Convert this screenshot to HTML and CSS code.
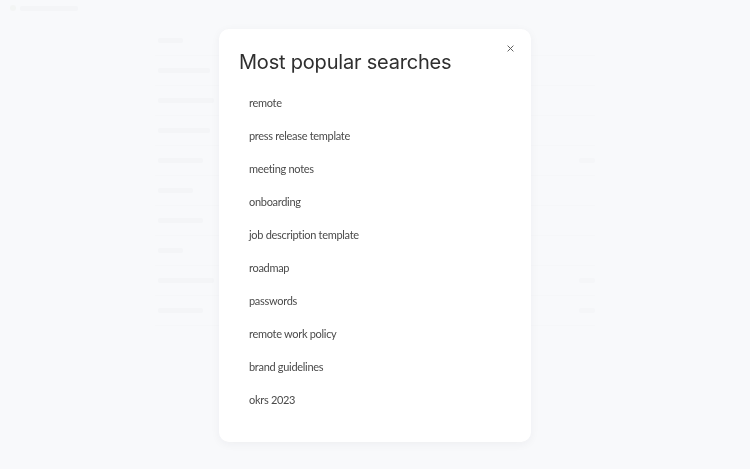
FILE: index.html
```html
<!DOCTYPE html>
<html lang="en">
<head>
<meta charset="utf-8">
<title>Most popular searches</title>
<link rel="stylesheet" href="styles.css">
</head>
<body>
<div class="page">
  <header class="topbar">
    <span class="logo-dot"></span>
    <span class="logo-text"></span>
  </header>
  <main class="content">
    <div class="row"><span class="bar w30"></span></div>
    <div class="row"><span class="bar w50"></span></div>
    <div class="row"><span class="bar w55"></span></div>
    <div class="row"><span class="bar w50"></span></div>
    <div class="row"><span class="bar w45"></span><span class="meta"></span></div>
    <div class="row"><span class="bar w40"></span></div>
    <div class="row"><span class="bar w45"></span></div>
    <div class="row"><span class="bar w30"></span></div>
    <div class="row"><span class="bar w55"></span><span class="meta"></span></div>
    <div class="row"><span class="bar w45"></span><span class="meta"></span></div>
  </main>
</div>

<div class="overlay">
  <div class="modal" role="dialog">
    <button class="close" aria-label="Close">
      <svg viewBox="0 0 8 8" width="7" height="7"><path d="M1 1L7 7M7 1L1 7" stroke="#5a5a5a" stroke-width="1.1" stroke-linecap="round"/></svg>
    </button>
    <h2 class="title">Most popular searches</h2>
    <ul class="list">
      <li>remote</li>
      <li>press release template</li>
      <li>meeting notes</li>
      <li>onboarding</li>
      <li>job description template</li>
      <li>roadmap</li>
      <li>passwords</li>
      <li>remote work policy</li>
      <li>brand guidelines</li>
      <li>okrs 2023</li>
    </ul>
  </div>
</div>
</body>
</html>
```

FILE: styles.css
```css
* { box-sizing: border-box; }
html, body { margin: 0; padding: 0; }
body {
  width: 750px;
  height: 469px;
  overflow: hidden;
  background: #f8f9fb;
  font-family: "Lato", "Noto Sans", sans-serif;
}
.page {
  height: 469px;
  display: flex;
  flex-direction: column;
}
.topbar {
  height: 16px;
  display: flex;
  align-items: center;
  gap: 4px;
  padding: 0 10px;
}
.logo-dot { width: 6px; height: 6px; border-radius: 50%; background: #f3f5f4; }
.logo-text { width: 58px; height: 5px; border-radius: 2px; background: #f4f5f7; }
.content {
  width: 440px;
  margin: 0 auto;
  padding-top: 10px;
  display: flex;
  flex-direction: column;
}
.row {
  height: 30px;
  display: flex;
  align-items: center;
  justify-content: space-between;
  padding-left: 3px;
  border-bottom: 1px solid #f6f7f9;
}
.bar { height: 5px; border-radius: 2px; background: #f4f5f7; }
.w30 { width: 25px; }
.w40 { width: 35px; }
.w45 { width: 45px; }
.w50 { width: 52px; }
.w55 { width: 56px; }
.meta { width: 16px; height: 5px; border-radius: 2px; background: #f5f6f8; }

.overlay {
  position: fixed;
  inset: 0;
  display: flex;
  align-items: center;
  justify-content: center;
}
.modal {
  position: relative;
  width: 312px;
  height: 413px;
  margin-top: 1px;
  background: #ffffff;
  border-radius: 10px;
  box-shadow: 0 2px 10px rgba(30, 40, 60, 0.05);
  padding: 19px 20px 0 20px;
}
.close {
  position: absolute;
  top: 14px;
  right: 15px;
  width: 12px;
  height: 12px;
  padding: 0;
  border: 0;
  background: none;
  display: flex;
  align-items: center;
  justify-content: center;
}
.title {
  margin: 0;
  font-family: "Inter", "Liberation Sans", sans-serif;
  font-weight: 400;
  font-size: 20px;
  line-height: 28px;
  color: #2f2f2f;
  letter-spacing: -0.2px;
}
.list {
  list-style: none;
  margin: 10px 0 0 0;
  padding: 0 0 0 10px;
}
.list li {
  height: 33px;
  display: flex;
  align-items: center;
  font-size: 11px;
  letter-spacing: -0.3px;
  color: #4a4a4a;
}
```
